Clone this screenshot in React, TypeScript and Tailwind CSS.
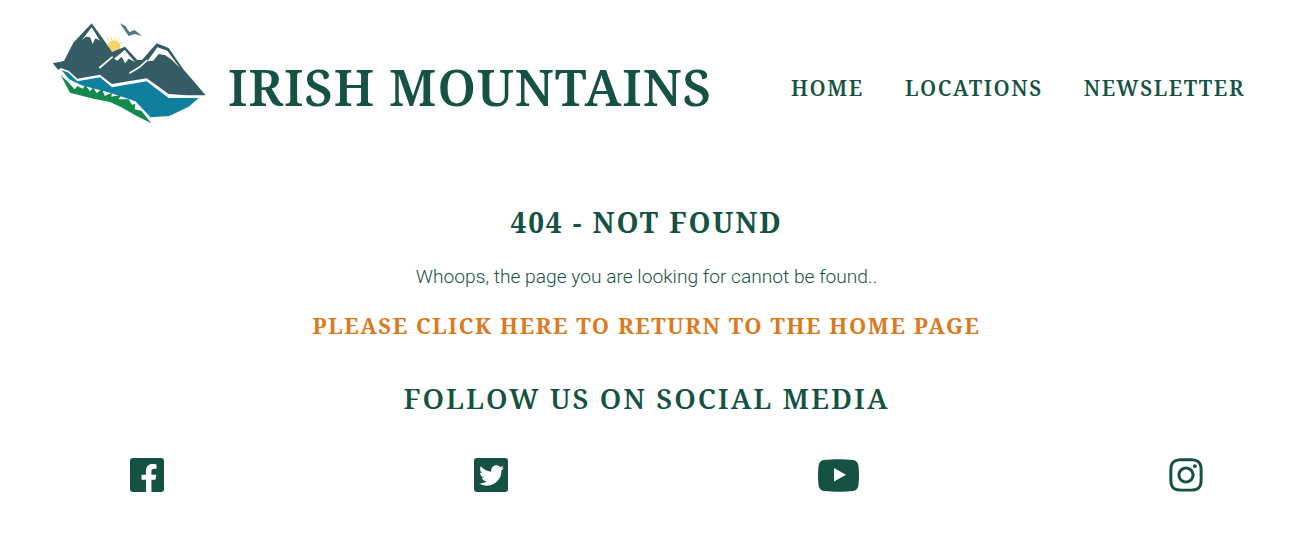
import { FaFacebookF, FaInstagram, FaTwitter } from "react-icons/fa";

const serif = "font-['Noto_Serif','Droid_Serif','DejaVu_Serif',serif]";

function Logo() {
  return (
    <svg viewBox="0 0 540 375" className="w-[180px] h-[125px] shrink-0">
      {/* bird */}
      <path d="M240 40 L256 48 L268 66 L284 60 L306 78 L284 72 L266 78 L252 58 Z" fill="#54767f" />
      {/* sun */}
      <circle cx="222" cy="110" r="19" fill="#f6d465" />
      <path d="M200 80 L207 94 M212 78 L215 91 M226 80 L224 90 M238 86 L232 95 M246 98 L238 102" stroke="#f6d465" strokeWidth="2.5" />
      {/* mountains */}
      <path
        d="M38 160 L72 153 L100 98 L128 68 L155 40 L190 88 L216 126 L255 110 L292 150 L306 150 L350 100 L386 114 L430 178 L497 256 L440 256 L386 252 L320 205 L216 222 L180 194 L112 206 L86 182 L62 174 L55 180 Z"
        fill="#355b65"
      />
      {/* snow caps */}
      <path d="M126 90 L155 52 L180 92 L166 85 L158 102 L150 82 L138 80 Z" fill="#fff" />
      <path d="M222 146 L254 120 L285 156 L266 146 L255 160 L245 140 L232 152 Z" fill="#fff" />
      <path d="M322 154 L352 112 L382 122 L420 174 L396 150 L376 136 L356 132 L340 152 Z" fill="#fff" />
      {/* ridge lines */}
      <path d="M178 174 L218 140" fill="none" stroke="#fff" strokeWidth="5" />
      <path d="M268 190 L298 172 L322 150" fill="none" stroke="#fff" strokeWidth="5" />
      {/* river */}
      <path
        d="M64 180 L86 188 L112 214 L180 202 L216 232 L320 214 L386 264 L476 264 L446 290 L388 318 L332 322 L286 274 L210 248 L124 226 L88 208 Z"
        fill="#0f7f9f"
      />
      {/* grass */}
      <path
        d="M62 194 L84 216 L104 238 L112 228 L128 236 L136 226 L150 244 L160 232 L170 250 L186 236 L194 258 L216 248 L214 260 L244 254 L236 268 L266 268 L276 284 L286 282 L284 298 L304 302 L334 340 L290 318 L244 292 L210 276 L160 266 L90 248 L78 226 Z"
        fill="#128a4c"
      />
    </svg>
  );
}

function YoutubeIcon() {
  return (
    <svg viewBox="0 0 41 33" className="w-[41px] h-[33px]" fill="currentColor">
      <path
        fillRule="evenodd"
        d="M6 1 C14 0 27 0 35 1 C38 1.4 40 3.4 40.4 6.5 C41.2 12 41.2 21 40.4 26.5 C40 29.6 38 31.6 35 32 C27 33 14 33 6 32 C3 31.6 1 29.6 .6 26.5 C-.2 21 -.2 12 .6 6.5 C1 3.4 3 1.4 6 1 Z M16 9 V22.5 L28 15.7 Z"
      />
    </svg>
  );
}

function NavLink({ children }: { children: React.ReactNode }) {
  return (
    <a href="#" className={`${serif} text-[21px] leading-none font-semibold tracking-[1.6px] text-[#155244]`}>
      {children}
    </a>
  );
}

export default function App() {
  return (
    <div className="w-full h-[544px] bg-white overflow-hidden text-[#155244]">
      {/* Header */}
      <header className="flex items-start pl-[40px] pr-[48px] pt-[10px]">
        <Logo />
        <h1 className={`${serif} ml-[8px] mt-[47px] text-[50px] leading-[60px] font-semibold tracking-[1px] whitespace-nowrap`}>
          IRISH MOUNTAINS
        </h1>
        <nav className="ml-auto flex gap-[41px] mt-[68px]">
          <NavLink>HOME</NavLink>
          <NavLink>LOCATIONS</NavLink>
          <NavLink>NEWSLETTER</NavLink>
        </nav>
      </header>

      {/* Not found message */}
      <main className="flex flex-col items-center mt-[69px]">
        <h2 className={`${serif} text-[28px] leading-[36px] font-bold tracking-[1.9px]`}>404 - NOT FOUND</h2>
        <p className="mt-[23px] font-['Roboto',sans-serif] font-light text-[19.2px] leading-[28px] text-[#155244]">
          Whoops, the page you are looking for cannot be found..
        </p>
        <a href="#" className={`${serif} mt-[20px] text-[22px] leading-[28px] font-bold tracking-[1.6px] text-[#dc7a1e]`}>
          PLEASE CLICK HERE TO RETURN TO THE HOME PAGE
        </a>
        <h2 className={`${serif} mt-[41px] text-[28px] leading-[36px] font-semibold tracking-[2px]`}>
          FOLLOW US ON SOCIAL MEDIA
        </h2>
      </main>

      {/* Social icons */}
      <div className="flex justify-between items-center pl-[130px] pr-[90px] mt-[40px] h-[38px] text-[#155244]">
        <div className="w-[34px] h-[34px] rounded-[3px] bg-[#155244] flex items-end justify-center pl-[4px] overflow-hidden">
          <FaFacebookF className="w-[18px] h-[28px] text-white" />
        </div>
        <div className="w-[34px] h-[34px] rounded-[3px] bg-[#155244] flex items-center justify-center">
          <FaTwitter className="w-[25px] h-[25px] text-white" />
        </div>
        <YoutubeIcon />
        <FaInstagram className="w-[34px] h-[38px]" />
      </div>
    </div>
  );
}
